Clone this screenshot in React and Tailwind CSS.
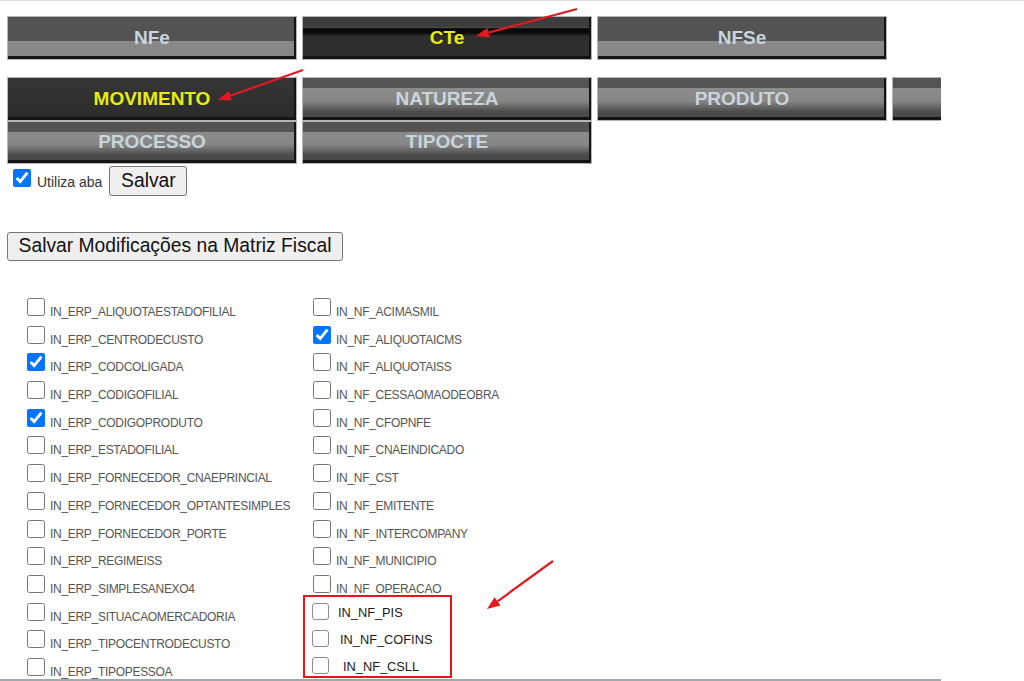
import React from "react";

const leftItems = [
  ["IN_ERP_ALIQUOTAESTADOFILIAL", false],
  ["IN_ERP_CENTRODECUSTO", false],
  ["IN_ERP_CODCOLIGADA", true],
  ["IN_ERP_CODIGOFILIAL", false],
  ["IN_ERP_CODIGOPRODUTO", true],
  ["IN_ERP_ESTADOFILIAL", false],
  ["IN_ERP_FORNECEDOR_CNAEPRINCIAL", false],
  ["IN_ERP_FORNECEDOR_OPTANTESIMPLES", false],
  ["IN_ERP_FORNECEDOR_PORTE", false],
  ["IN_ERP_REGIMEISS", false],
  ["IN_ERP_SIMPLESANEXO4", false],
  ["IN_ERP_SITUACAOMERCADORIA", false],
  ["IN_ERP_TIPOCENTRODECUSTO", false],
  ["IN_ERP_TIPOPESSOA", false],
];

const rightItems = [
  ["IN_NF_ACIMASMIL", false],
  ["IN_NF_ALIQUOTAICMS", true],
  ["IN_NF_ALIQUOTAISS", false],
  ["IN_NF_CESSAOMAODEOBRA", false],
  ["IN_NF_CFOPNFE", false],
  ["IN_NF_CNAEINDICADO", false],
  ["IN_NF_CST", false],
  ["IN_NF_EMITENTE", false],
  ["IN_NF_INTERCOMPANY", false],
  ["IN_NF_MUNICIPIO", false],
  ["IN_NF_OPERACAO", false],
];

// new fields, pasted in with the red highlight
const newItems = [
  ["IN_NF_PIS", "ml-[9px]"],
  ["IN_NF_COFINS", "ml-[11px]"],
  ["IN_NF_CSLL", "ml-[14px]"],
];

const tabBase =
  "flex items-center justify-center font-bold text-[19px] border border-[#b5b5b5] shadow-[inset_-2px_-3px_0_#141414]";

const top = {
  normal:
    "bg-[linear-gradient(to_bottom,#535353_0%,#535353_58%,#8a8a8a_58%,#858585_100%)] text-[#c9d4dc]",
  active:
    "bg-[linear-gradient(to_bottom,#3d3d3d_0%,#3d3d3d_23%,#4a4a4a_25%,#050505_28%,#0a0a0a_38%,#2e2e2e_45%,#2e2e2e_100%)] text-[#e8ec14]",
};

const sub = {
  normal:
    "bg-[linear-gradient(to_bottom,#545454_0%,#545454_23%,#8b8b8b_25%,#868686_55%,#4c4c4c_80%,#4a4a4a_100%)] text-[#c9d4dc]",
  active: "bg-[linear-gradient(to_bottom,#363636,#2b2b2b)] text-[#e8ec14]",
};

function Arrow({ x1, y1, x2, y2 }) {
  const a = Math.atan2(y2 - y1, x2 - x1);
  const L = 13;
  const W = 5;
  const bx = x2 - L * Math.cos(a);
  const by = y2 - L * Math.sin(a);
  const px = -Math.sin(a) * W;
  const py = Math.cos(a) * W;
  return (
    <g>
      <line x1={x1} y1={y1} x2={bx} y2={by} stroke="#e3191f" strokeWidth="2.2" />
      <polygon
        points={`${x2},${y2} ${bx + px},${by + py} ${bx - px},${by - py}`}
        fill="#e3191f"
      />
    </g>
  );
}

function Row({ label, checked }) {
  return (
    <div className="h-[27.7px] flex items-start">
      <div className="flex items-end gap-[5px]">
        <input
          type="checkbox"
          defaultChecked={checked}
          className="w-[18px] h-[18px] m-0 accent-[#0075ff]"
        />
        <span className="text-[12px] leading-none tracking-[-0.3px] text-[#555] -mb-[2px] whitespace-nowrap">
          {label}
        </span>
      </div>
    </div>
  );
}

export default function App() {
  return (
    <div className="w-[1024px] h-[681px] bg-white border-t border-[#dcdcdc] relative overflow-hidden font-['Liberation_Sans',Arial,sans-serif]">
      <div className="w-[941px] h-[680px] border-b-2 border-[#a3a8ad] overflow-hidden pl-[7px] pt-[15px]">
        {/* document type tabs */}
        <div className="flex gap-[5px] h-[44px]">
          <div className={`${tabBase} ${top.normal} w-[290px]`}>NFe</div>
          <div className={`${tabBase} ${top.active} w-[290px]`}>CTe</div>
          <div className={`${tabBase} ${top.normal} w-[290px]`}>NFSe</div>
        </div>

        {/* sub tabs */}
        <div className="mt-[17px] grid grid-cols-[repeat(4,290px)] grid-rows-[44px_43px] gap-x-[5px]">
          <div className={`${tabBase} ${sub.active}`}>MOVIMENTO</div>
          <div className={`${tabBase} ${sub.normal}`}>NATUREZA</div>
          <div className={`${tabBase} ${sub.normal}`}>PRODUTO</div>
          <div className={`${tabBase} ${sub.normal}`}></div>
          <div className={`${tabBase} ${sub.normal}`}>PROCESSO</div>
          <div className={`${tabBase} ${sub.normal}`}>TIPOCTE</div>
        </div>

        <div className="mt-[2px] flex items-end pl-[6px]">
          <input
            type="checkbox"
            defaultChecked
            className="w-[18px] h-[18px] m-0 mb-[9px] accent-[#0075ff]"
          />
          <span className="ml-[6px] mb-[7px] text-[14px] leading-none text-[#333]">
            Utiliza aba
          </span>
          <button className="ml-[7px] w-[78px] h-[30px] flex items-center justify-center bg-[#efefef] border border-[#767676] rounded-[3px] text-[19.3px] text-[#111]">
            Salvar
          </button>
        </div>

        <button className="mt-[36px] w-[336px] h-[29px] flex items-center justify-center bg-[#efefef] border border-[#767676] rounded-[3px] text-[19.3px] text-[#111] whitespace-nowrap">
          Salvar Modificações na Matriz Fiscal
        </button>

        {/* fiscal matrix fields */}
        <div className="mt-[37px] pl-[20px] flex">
          <div className="w-[286px]">
            {leftItems.map(([l, c]) => (
              <Row key={l} label={l} checked={c} />
            ))}
          </div>
          <div>
            {rightItems.map(([l, c]) => (
              <Row key={l} label={l} checked={c} />
            ))}
            <div className="-mt-[8px] -ml-[10px] w-[149px] h-[83px] border-2 border-[#e8161b] pt-[6px] pl-[7px]">
              {newItems.map(([l, ml]) => (
                <div key={l} className="h-[27px] flex items-start">
                  <div className="flex items-end">
                    <span className="w-[17px] h-[17px] border border-[#8c8c8c] rounded-[3px] bg-white" />
                    <span className={`${ml} text-[12.8px] leading-none text-[#1a1a1a]`}>
                      {l}
                    </span>
                  </div>
                </div>
              ))}
            </div>
          </div>
        </div>
      </div>

      {/* annotation arrows */}
      <svg
        className="absolute inset-0 pointer-events-none"
        width="1024"
        height="681"
        viewBox="0 0 1024 681"
      >
        <Arrow x1={577} y1={8} x2={476} y2={35} />
        <Arrow x1={303} y1={69} x2={218} y2={99} />
        <Arrow x1={553} y1={560} x2={487} y2={608} />
      </svg>
    </div>
  );
}
